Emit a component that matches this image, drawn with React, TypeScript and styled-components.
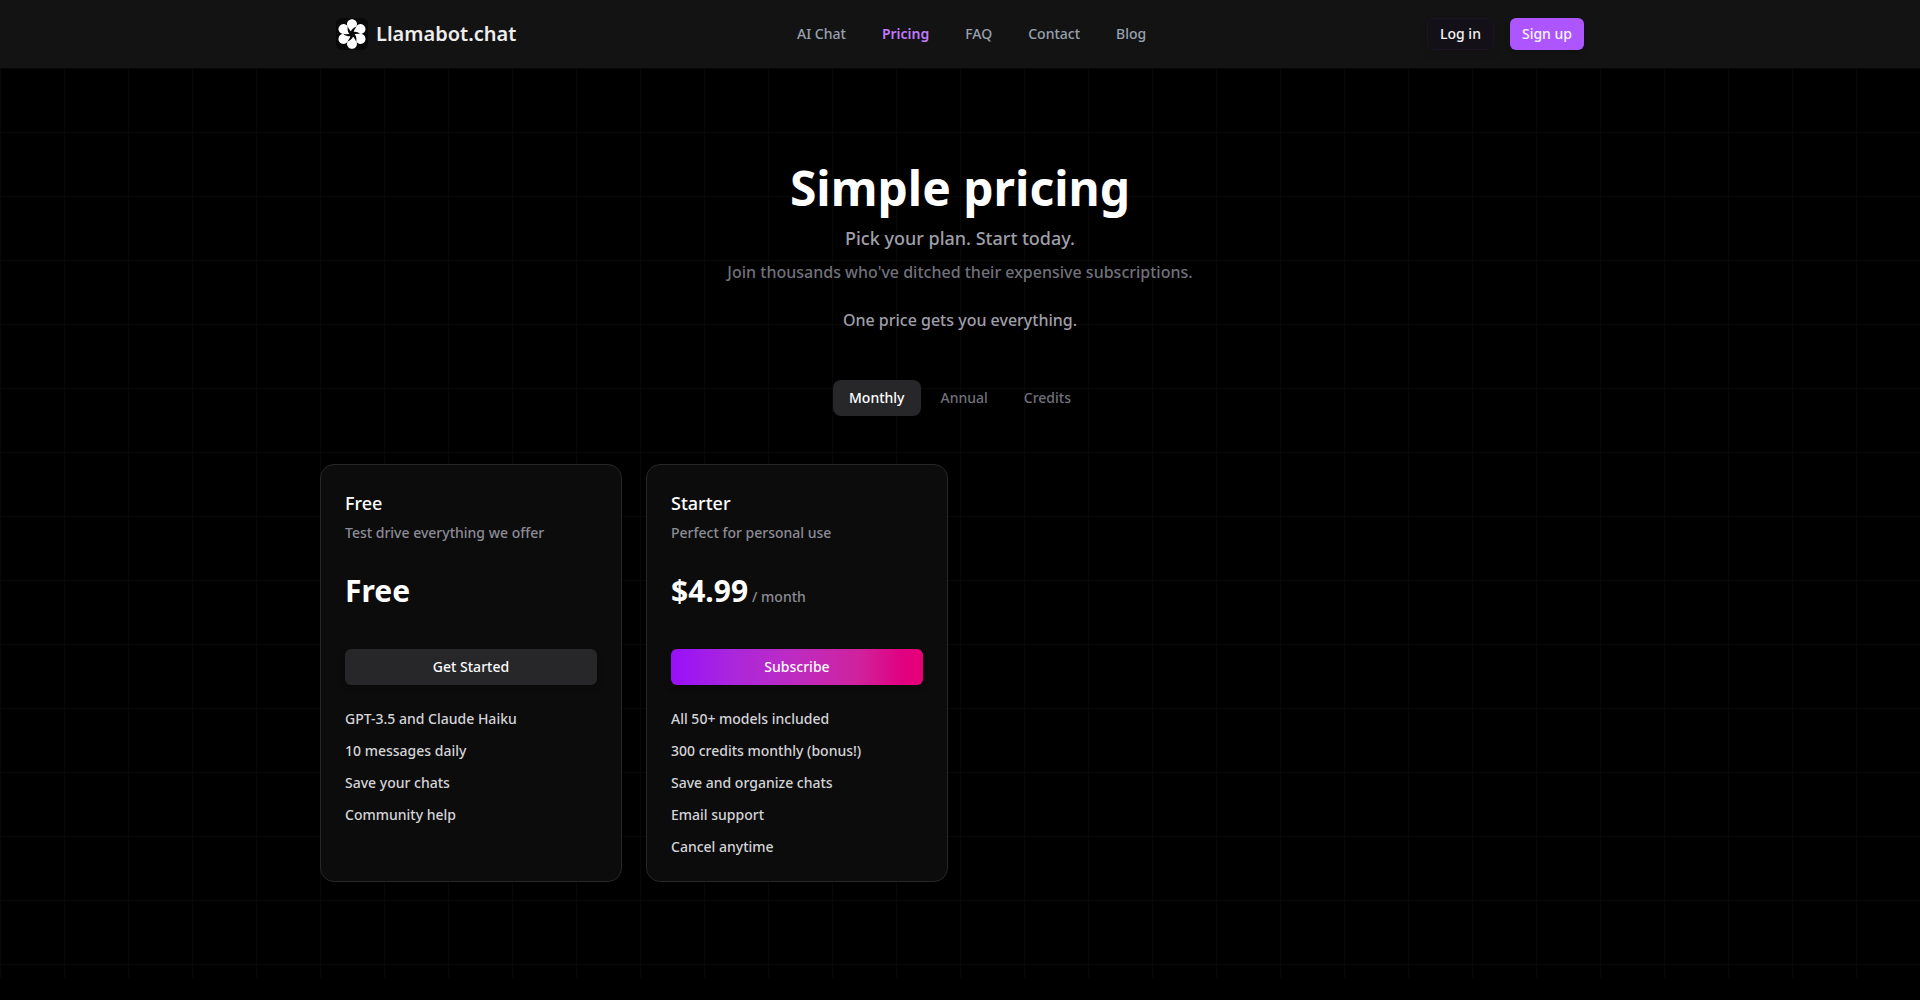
import React, { useState } from "react";
import styled, { createGlobalStyle, css } from "styled-components";

const GlobalStyle = createGlobalStyle`
  *, *::before, *::after { box-sizing: border-box; }
  body {
    margin: 0;
    background: #000;
    color: #fff;
    font-family: "Noto Sans", "Open Sans", sans-serif;
    font-size: 14px;
    line-height: 20px;
  }
  h1, h2, p, ul { margin: 0; padding: 0; }
  button { font: inherit; border: 0; cursor: pointer; }
`;

const Page = styled.div`
  min-height: 100vh;
  display: flex;
  flex-direction: column;
`;

const Header = styled.header`
  background: #131313;
`;

const HeaderInner = styled.div`
  max-width: 1280px;
  margin: 0 auto;
  padding: 18px 16px;
  display: flex;
  align-items: center;
  justify-content: space-between;
`;

const Brand = styled.a`
  display: flex;
  align-items: center;
  gap: 8px;
  color: #ededed;
  font-size: 20px;
  line-height: 28px;
  font-weight: 600;
  text-decoration: none;
`;

const Nav = styled.nav`
  display: flex;
  gap: 36px;
`;

const NavLink = styled.a<{ $active?: boolean }>`
  color: ${(p) => (p.$active ? "#c27aff" : "#99a1af")};
  font-weight: ${(p) => (p.$active ? 600 : 500)};
  text-decoration: none;
`;

const Actions = styled.div`
  display: flex;
  gap: 16px;
`;

const AuthButton = styled.button<{ $primary?: boolean }>`
  height: 32px;
  padding: 0 12px;
  border-radius: 6px;
  font-weight: 500;
  color: #f4f4f5;
  box-shadow: 0 4px 6px rgba(0, 0, 0, 0.1);
  ${(p) =>
    p.$primary
      ? css`
          background: #ad56ff;
        `
      : css`
          background: #131117;
          border: 1px solid #1a1423;
        `}
`;

const Main = styled.main`
  padding: 96px 16px;
  background-image:
    linear-gradient(to right, #080808 1px, transparent 1px),
    linear-gradient(to bottom, #080808 1px, transparent 1px);
  background-size: 64px 64px;
`;

const Container = styled.div`
  max-width: 1280px;
  margin: 0 auto;
  display: flex;
  flex-direction: column;
  gap: 48px;
`;

const Intro = styled.section`
  text-align: center;
`;

const Title = styled.h1`
  font-size: 48px;
  line-height: 48px;
  font-weight: 700;
`;

const Lead = styled.p`
  margin-top: 12px;
  color: #9f9fa9;
  font-size: 18px;
  line-height: 28px;
  font-weight: 500;
`;

const Note = styled.p<{ $muted?: boolean }>`
  margin-top: ${(p) => (p.$muted ? 8 : 24)}px;
  color: ${(p) => (p.$muted ? "#71717b" : "#9f9fa9")};
  font-size: 16px;
  line-height: 24px;
  font-weight: 500;
`;

const Tabs = styled.div`
  display: flex;
  justify-content: center;
  gap: 4px;
`;

const Tab = styled.button<{ $selected: boolean }>`
  padding: 8px 16px;
  border-radius: 8px;
  font-weight: 500;
  background: ${(p) => (p.$selected ? "#27272a" : "transparent")};
  color: ${(p) => (p.$selected ? "#fff" : "#71717b")};
`;

const Plans = styled.section`
  display: grid;
  grid-template-columns: repeat(4, minmax(0, 1fr));
  gap: 24px;
`;

const Card = styled.article`
  padding: 24px;
  border: 1px solid #27272a;
  border-radius: 14px;
  background: #0c0c0c;
`;

const PlanName = styled.h2`
  font-size: 18px;
  line-height: 28px;
  font-weight: 500;
`;

const PlanText = styled.p`
  margin-top: 6px;
  color: #8b8b95;
  font-weight: 500;
`;

const Price = styled.p`
  margin-top: 24px;
  display: flex;
  align-items: baseline;
  gap: 4px;
  font-size: 30px;
  line-height: 48px;
  font-weight: 700;
`;

const Period = styled.span`
  color: #8b8b95;
  font-size: 14px;
  line-height: 20px;
  font-weight: 500;
`;

const PlanButton = styled.button<{ $accent?: boolean }>`
  width: 100%;
  height: 36px;
  margin: 34px 0 24px;
  border-radius: 6px;
  color: #fafafa;
  font-weight: 500;
  background: ${(p) =>
    p.$accent
      ? "linear-gradient(to right, #9810fa 0%, #ab27dc 25%, #be2bc0 50%, #d0229c 75%, #e00080 92%, #e60076 100%)"
      : "#27272a"};
  box-shadow: 0 4px 6px rgba(0, 0, 0, 0.2);
`;

const Features = styled.ul`
  display: flex;
  flex-direction: column;
  gap: 12px;
  list-style: none;
  color: #d4d4d8;
  font-weight: 500;
`;

const petals = [0, 60, 120, 180, 240, 300];

function Logo() {
  return (
    <svg width="32" height="32" viewBox="0 0 32 32" aria-hidden="true">
      <rect width="32" height="32" rx="6" fill="#090909" />
      {petals.map((angle) => (
        <path
          key={angle}
          transform={`rotate(${angle} 16 16)`}
          fill="#fff"
          d="M16 16L12.2 9.6C10.6 7.6 10.6 4.6 12.3 2.8C14.4 .6 17.6 .6 19.7 2.8C21.4 4.6 21.4 7.6 19.8 9.6Z"
        />
      ))}
      {petals.map((angle) => (
        <path
          key={angle}
          transform={`rotate(${angle} 16 16)`}
          fill="#090909"
          d="M14.6 15.2C14.6 12.6 16.4 10 20.6 8.4C18.6 10.6 17.6 12.8 17.6 15.4L16 18Z"
        />
      ))}
    </svg>
  );
}

const links = ["AI Chat", "Pricing", "FAQ", "Contact", "Blog"];
const periods = ["Monthly", "Annual", "Credits"];

const plans = [
  {
    name: "Free",
    text: "Test drive everything we offer",
    price: "Free",
    action: "Get Started",
    features: ["GPT-3.5 and Claude Haiku", "10 messages daily", "Save your chats", "Community help"],
  },
  {
    name: "Starter",
    text: "Perfect for personal use",
    price: "$4.99",
    period: "/ month",
    action: "Subscribe",
    accent: true,
    features: [
      "All 50+ models included",
      "300 credits monthly (bonus!)",
      "Save and organize chats",
      "Email support",
      "Cancel anytime",
    ],
  },
];

export default function App() {
  const [selected, setSelected] = useState("Monthly");

  return (
    <Page>
      <GlobalStyle />
      <Header>
        <HeaderInner>
          <Brand href="#">
            <Logo />
            Llamabot.chat
          </Brand>
          <Nav>
            {links.map((label) => (
              <NavLink key={label} href="#" $active={label === "Pricing"}>
                {label}
              </NavLink>
            ))}
          </Nav>
          <Actions>
            <AuthButton type="button">Log in</AuthButton>
            <AuthButton type="button" $primary>
              Sign up
            </AuthButton>
          </Actions>
        </HeaderInner>
      </Header>
      <Main>
        <Container>
          <Intro>
            <Title>Simple pricing</Title>
            <Lead>Pick your plan. Start today.</Lead>
            <Note $muted>Join thousands who've ditched their expensive subscriptions.</Note>
            <Note>One price gets you everything.</Note>
          </Intro>
          <Tabs role="tablist">
            {periods.map((label) => (
              <Tab
                key={label}
                type="button"
                role="tab"
                aria-selected={label === selected}
                $selected={label === selected}
                onClick={() => setSelected(label)}
              >
                {label}
              </Tab>
            ))}
          </Tabs>
          <Plans>
            {plans.map((plan) => (
              <Card key={plan.name}>
                <PlanName>{plan.name}</PlanName>
                <PlanText>{plan.text}</PlanText>
                <Price>
                  {plan.price}
                  {plan.period && <Period>{plan.period}</Period>}
                </Price>
                <PlanButton type="button" $accent={plan.accent}>
                  {plan.action}
                </PlanButton>
                <Features>
                  {plan.features.map((feature) => (
                    <li key={feature}>{feature}</li>
                  ))}
                </Features>
              </Card>
            ))}
          </Plans>
        </Container>
      </Main>
    </Page>
  );
}
